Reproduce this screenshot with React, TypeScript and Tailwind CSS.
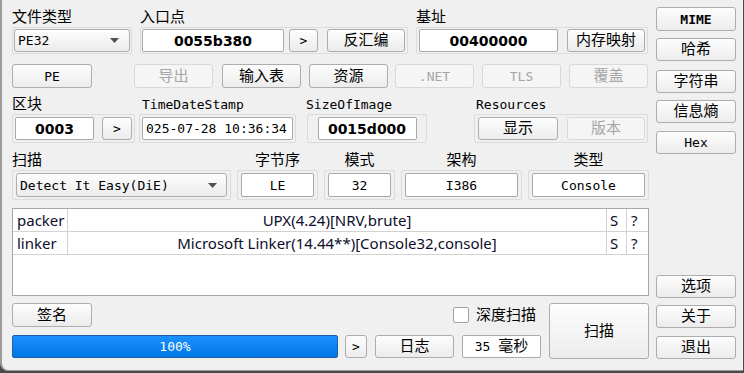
import React from 'react';

type Kids = { children?: React.ReactNode; className?: string };

const Btn = ({ children, className = '', disabled = false, mono = false }: Kids & { disabled?: boolean; mono?: boolean }) => (
  <div
    className={`flex items-center justify-center rounded-[3px] border leading-none ${
      disabled
        ? 'border-[#d9d9d9] bg-[#f5f5f5] text-[#a6a6a6]'
        : 'border-[#adadad] bg-linear-to-b from-[#fdfdfd] to-[#ececec] text-black'
    } ${mono ? 'text-[13px]' : 'text-[15px]'} ${className}`}
  >
    {children}
  </div>
);

const Field = ({ children, className = '', bold = false }: Kids & { bold?: boolean }) => (
  <div
    className={`flex items-center justify-center rounded-[2px] border border-[#a9a9a9] bg-white leading-none text-black ${
      bold ? "font-['DejaVu_Sans',sans-serif] text-[14px] font-bold" : 'text-[13px]'
    } ${className}`}
  >
    {children}
  </div>
);

const Frame = ({ children, className = '' }: Kids) => (
  <div className={`flex items-center rounded-[2px] border border-[#dcdcdc] ${className}`}>{children}</div>
);

const Arrow = () => (
  <svg width="9" height="5" viewBox="0 0 9 5" className="shrink-0">
    <path d="M0 0h9L4.5 5z" fill="#505050" />
  </svg>
);

const Combo = ({ children, className = '' }: Kids) => (
  <div
    className={`flex items-center justify-between rounded-[3px] border border-[#adadad] bg-linear-to-b from-[#fdfdfd] to-[#ececec] pl-[3px] text-[13px] leading-none ${className}`}
  >
    <span>{children}</span>
    <Arrow />
  </div>
);

const Label = ({ children, className = '', mono = false }: Kids & { mono?: boolean }) => (
  <div className={`flex h-[18px] items-center leading-none text-black ${mono ? 'text-[13px]' : 'text-[15px]'} ${className}`}>
    {children}
  </div>
);

const rows = [
  ['packer', 'UPX(4.24)[NRV,brute]'],
  ['linker', 'Microsoft Linker(14.44**)[Console32,console]'],
];

export default function App() {
  return (
    <div className="h-[373px] w-[744px] overflow-hidden bg-[#4a4a47] font-['DejaVu_Sans_Mono','Noto_Sans_CJK_SC',monospace]">
      <div className="flex h-[371px] w-[743px] rounded-bl-[8px] border-b border-l-2 border-[#9b9b9b] bg-[#f0f0f0]">
        {/* main area */}
        <div className="flex w-[654px] flex-col pl-[10px]">
          {/* row 1 */}
          <div className="mt-[8px] flex">
            <Label className="w-[128px]">文件类型</Label>
            <Label className="w-[276px]">入口点</Label>
            <Label>基址</Label>
          </div>
          <div className="mt-[1px] flex">
            <Frame className="h-[27px] w-[120px] justify-center">
              <Combo className="h-[23px] w-[116px] pr-[10px]">PE32</Combo>
            </Frame>
            <Frame className="ml-[8px] h-[27px] w-[268px] pl-[1px]">
              <Field bold className="h-[23px] w-[142px]">0055b380</Field>
              <Btn mono className="ml-[5px] h-[23px] w-[29px]">&gt;</Btn>
              <Btn className="ml-[9px] h-[23px] w-[78px]">反汇编</Btn>
            </Frame>
            <Frame className="ml-[8px] h-[27px] w-[232px] pl-[2px]">
              <Field bold className="h-[23px] w-[139px]">00400000</Field>
              <Btn className="ml-[9px] h-[23px] w-[78px]">内存映射</Btn>
            </Frame>
          </div>

          {/* row 2 */}
          <div className="mt-[10px] flex h-[24px]">
            <Btn mono className="w-[80px]">PE</Btn>
            <Btn disabled className="ml-[42px] w-[79px]">导出</Btn>
            <Btn className="ml-[9px] w-[79px]">输入表</Btn>
            <Btn className="ml-[8px] w-[79px]">资源</Btn>
            <Btn disabled mono className="ml-[7px] w-[79px]">.NET</Btn>
            <Btn disabled mono className="ml-[8px] w-[79px]">TLS</Btn>
            <Btn disabled className="ml-[8px] w-[79px]">覆盖</Btn>
          </div>

          {/* row 3 */}
          <div className="mt-[7px] flex">
            <Label className="w-[130px]">区块</Label>
            <Label mono className="w-[164px]">TimeDateStamp</Label>
            <Label mono className="w-[170px]">SizeOfImage</Label>
            <Label mono>Resources</Label>
          </div>
          <div className="mt-[1px] flex">
            <Frame className="h-[29px] w-[123px] pl-[2px]">
              <Field bold className="h-[23px] w-[79px]">0003</Field>
              <Btn mono className="ml-[8px] h-[23px] w-[30px]">&gt;</Btn>
            </Frame>
            <Frame className="ml-[4px] h-[29px] w-[157px] pl-[2px]">
              <Field className="h-[23px] w-[151px] justify-start! pl-[3px]">025-07-28 10:36:34</Field>
            </Frame>
            <Frame className="ml-[11px] h-[29px] w-[120px] justify-center">
              <Field bold className="h-[23px] w-[99px]">0015d000</Field>
            </Frame>
            <Frame className="ml-[47px] h-[29px] w-[174px] pl-[3px]">
              <Btn className="h-[23px] w-[80px]">显示</Btn>
              <Btn disabled className="ml-[9px] h-[23px] w-[78px]">版本</Btn>
            </Frame>
          </div>

          {/* row 4 */}
          <div className="mt-[8px] flex">
            <Label className="w-[219px]">扫描</Label>
            <Label className="ml-[6px] w-[81px] justify-center">字节序</Label>
            <Label className="ml-[6px] w-[71px] justify-center">模式</Label>
            <Label className="ml-[6px] w-[121px] justify-center">架构</Label>
            <Label className="ml-[6px] w-[121px] justify-center">类型</Label>
          </div>
          <div className="mt-[1px] flex">
            <Frame className="h-[30px] w-[219px] justify-center">
              <Combo className="h-[24px] w-[211px] pr-[9px]">Detect It Easy(DiE)</Combo>
            </Frame>
            <Frame className="ml-[6px] h-[30px] w-[81px] justify-center">
              <Field className="h-[24px] w-[73px]">LE</Field>
            </Frame>
            <Frame className="ml-[6px] h-[30px] w-[71px] justify-center">
              <Field className="h-[24px] w-[63px]">32</Field>
            </Frame>
            <Frame className="ml-[6px] h-[30px] w-[121px] justify-center">
              <Field className="h-[24px] w-[113px]">I386</Field>
            </Frame>
            <Frame className="ml-[6px] h-[30px] w-[121px] justify-center">
              <Field className="h-[24px] w-[113px]">Console</Field>
            </Frame>
          </div>

          {/* result table */}
          <div className="mt-[8px] h-[88px] w-[637px] border border-[#a7a7a7] bg-white font-['Noto_Sans',sans-serif] text-[15px] text-[#0d0d2b]">
            {rows.map(([type, name]) => (
              <div key={type} className="grid h-[23px] grid-cols-[55px_539px_20px_21px] border-b border-[#d2d2d2] leading-none">
                <div className="flex items-center border-r border-[#d2d2d2] pl-[4px]">{type}</div>
                <div className="flex items-center justify-center border-r border-[#d2d2d2]">{name}</div>
                <div className="flex items-center border-r border-[#d2d2d2] pl-[3px]">S</div>
                <div className="flex items-center pl-[4px]">?</div>
              </div>
            ))}
          </div>

          {/* bottom */}
          <div className="mt-[7px] flex">
            <div className="flex w-[529px] flex-col">
              <div className="flex h-[24px] items-center">
                <Btn className="h-[24px] w-[80px]">签名</Btn>
                <div className="ml-[361px] h-[16px] w-[16px] rounded-[2px] border border-[#a3a3a3] bg-white" />
                <span className="ml-[7px] text-[15px] leading-none">深度扫描</span>
              </div>
              <div className="mt-[8px] flex h-[23px]">
                <div className="flex w-[326px] items-center justify-center rounded-[2px] border border-[#1f5fa6] bg-linear-to-b from-[#1a90ff] to-[#0077e6] text-[13px] leading-none text-white">
                  100%
                </div>
                <Btn mono className="ml-[7px] w-[22px]">&gt;</Btn>
                <Btn className="ml-[8px] w-[79px]">日志</Btn>
                <Field className="ml-[8px] w-[79px] gap-[8px]">
                  <span>35</span>
                  <span className="text-[15px]">毫秒</span>
                </Field>
              </div>
            </div>
            <Btn className="ml-[8px] h-[56px] w-[100px]">扫描</Btn>
          </div>
        </div>

        {/* right column */}
        <div className="flex w-[80px] flex-col pb-[11px] pt-[7px]">
          <Btn mono className="h-[24px] font-bold">MIME</Btn>
          <Btn className="mt-[7px] h-[23px]">哈希</Btn>
          <Btn className="mt-[9px] h-[23px]">字符串</Btn>
          <Btn className="mt-[7px] h-[23px]">信息熵</Btn>
          <Btn mono className="mt-[8px] h-[23px]">Hex</Btn>
          <div className="mt-auto flex flex-col">
            <Btn className="h-[23px]">选项</Btn>
            <Btn className="mt-[7px] h-[23px]">关于</Btn>
            <Btn className="mt-[8px] h-[23px]">退出</Btn>
          </div>
        </div>
      </div>
    </div>
  );
}
